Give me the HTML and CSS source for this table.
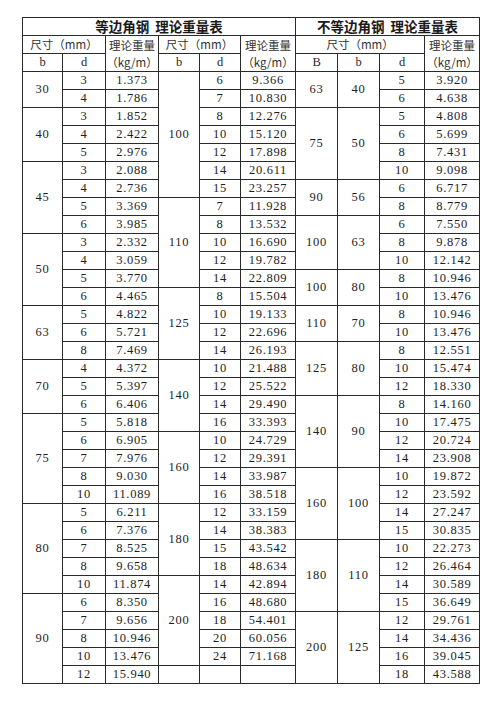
FILE: index.html
```html
<!DOCTYPE html>
<html lang="zh-CN">
<head>
<meta charset="utf-8">
<title>角钢理论重量表</title>
<link rel="stylesheet" href="styles.css">
</head>
<body>
<table class="sheet">
<colgroup>
<col class="c40"><col class="c43"><col class="c53"><col class="c41"><col class="c41"><col class="c55"><col class="c42"><col class="c42"><col class="c45"><col class="c55">
</colgroup>
<thead>
<tr><th colspan="6" class="title">等边角钢 理论重量表</th><th colspan="4" class="title">不等边角钢 理论重量表</th></tr>
<tr><th colspan="2" class="hd">尺寸（mm）</th><th rowspan="2" class="hd">理论重量<br>（kg/m）</th><th colspan="2" class="hd">尺寸（mm）</th><th rowspan="2" class="hd">理论重量<br>（kg/m）</th><th colspan="3" class="hd">尺寸（mm）</th><th rowspan="2" class="hd">理论重量<br>（kg/m）</th></tr>
<tr><th class="lt">b</th><th class="lt">d</th><th class="lt">b</th><th class="lt">d</th><th class="lt">B</th><th class="lt">b</th><th class="lt">d</th></tr>
</thead>
<tbody>
<tr><td rowspan="2">30</td><td>3</td><td>1.373</td><td rowspan="7">100</td><td>6</td><td>9.366</td><td rowspan="2">63</td><td rowspan="2">40</td><td>5</td><td>3.920</td></tr>
<tr><td>4</td><td>1.786</td><td>7</td><td>10.830</td><td>6</td><td>4.638</td></tr>
<tr><td rowspan="3">40</td><td>3</td><td>1.852</td><td>8</td><td>12.276</td><td rowspan="4">75</td><td rowspan="4">50</td><td>5</td><td>4.808</td></tr>
<tr><td>4</td><td>2.422</td><td>10</td><td>15.120</td><td>6</td><td>5.699</td></tr>
<tr><td>5</td><td>2.976</td><td>12</td><td>17.898</td><td>8</td><td>7.431</td></tr>
<tr><td rowspan="4">45</td><td>3</td><td>2.088</td><td>14</td><td>20.611</td><td>10</td><td>9.098</td></tr>
<tr><td>4</td><td>2.736</td><td>15</td><td>23.257</td><td rowspan="2">90</td><td rowspan="2">56</td><td>6</td><td>6.717</td></tr>
<tr><td>5</td><td>3.369</td><td rowspan="5">110</td><td>7</td><td>11.928</td><td>8</td><td>8.779</td></tr>
<tr><td>6</td><td>3.985</td><td>8</td><td>13.532</td><td rowspan="3">100</td><td rowspan="3">63</td><td>6</td><td>7.550</td></tr>
<tr><td rowspan="4">50</td><td>3</td><td>2.332</td><td>10</td><td>16.690</td><td>8</td><td>9.878</td></tr>
<tr><td>4</td><td>3.059</td><td>12</td><td>19.782</td><td>10</td><td>12.142</td></tr>
<tr><td>5</td><td>3.770</td><td>14</td><td>22.809</td><td rowspan="2">100</td><td rowspan="2">80</td><td>8</td><td>10.946</td></tr>
<tr><td>6</td><td>4.465</td><td rowspan="4">125</td><td>8</td><td>15.504</td><td>10</td><td>13.476</td></tr>
<tr><td rowspan="3">63</td><td>5</td><td>4.822</td><td>10</td><td>19.133</td><td rowspan="2">110</td><td rowspan="2">70</td><td>8</td><td>10.946</td></tr>
<tr><td>6</td><td>5.721</td><td>12</td><td>22.696</td><td>10</td><td>13.476</td></tr>
<tr><td>8</td><td>7.469</td><td>14</td><td>26.193</td><td rowspan="3">125</td><td rowspan="3">80</td><td>8</td><td>12.551</td></tr>
<tr><td rowspan="3">70</td><td>4</td><td>4.372</td><td rowspan="4">140</td><td>10</td><td>21.488</td><td>10</td><td>15.474</td></tr>
<tr><td>5</td><td>5.397</td><td>12</td><td>25.522</td><td>12</td><td>18.330</td></tr>
<tr><td>6</td><td>6.406</td><td>14</td><td>29.490</td><td rowspan="4">140</td><td rowspan="4">90</td><td>8</td><td>14.160</td></tr>
<tr><td rowspan="5">75</td><td>5</td><td>5.818</td><td>16</td><td>33.393</td><td>10</td><td>17.475</td></tr>
<tr><td>6</td><td>6.905</td><td rowspan="4">160</td><td>10</td><td>24.729</td><td>12</td><td>20.724</td></tr>
<tr><td>7</td><td>7.976</td><td>12</td><td>29.391</td><td>14</td><td>23.908</td></tr>
<tr><td>8</td><td>9.030</td><td>14</td><td>33.987</td><td rowspan="4">160</td><td rowspan="4">100</td><td>10</td><td>19.872</td></tr>
<tr><td>10</td><td>11.089</td><td>16</td><td>38.518</td><td>12</td><td>23.592</td></tr>
<tr><td rowspan="5">80</td><td>5</td><td>6.211</td><td rowspan="4">180</td><td>12</td><td>33.159</td><td>14</td><td>27.247</td></tr>
<tr><td>6</td><td>7.376</td><td>14</td><td>38.383</td><td>15</td><td>30.835</td></tr>
<tr><td>7</td><td>8.525</td><td>15</td><td>43.542</td><td rowspan="4">180</td><td rowspan="4">110</td><td>10</td><td>22.273</td></tr>
<tr><td>8</td><td>9.658</td><td>18</td><td>48.634</td><td>12</td><td>26.464</td></tr>
<tr><td>10</td><td>11.874</td><td rowspan="5">200</td><td>14</td><td>42.894</td><td>14</td><td>30.589</td></tr>
<tr><td rowspan="5">90</td><td>6</td><td>8.350</td><td>16</td><td>48.680</td><td>15</td><td>36.649</td></tr>
<tr><td>7</td><td>9.656</td><td>18</td><td>54.401</td><td rowspan="4">200</td><td rowspan="4">125</td><td>12</td><td>29.761</td></tr>
<tr><td>8</td><td>10.946</td><td>20</td><td>60.056</td><td>14</td><td>34.436</td></tr>
<tr><td>10</td><td>13.476</td><td>24</td><td>71.168</td><td>16</td><td>39.045</td></tr>
<tr><td>12</td><td>15.940</td><td></td><td></td><td></td><td>18</td><td>43.588</td></tr>
</tbody>
</table>
</body>
</html>
```
FILE: styles.css
```css
html, body {
  margin: 0;
  padding: 0;
  background: #fff;
}

body {
  padding: 17px 0 0 22px;
}

.sheet {
  border-collapse: collapse;
  table-layout: fixed;
  width: 457px;
  color: #1e1e1e;
  font-family: "Liberation Serif", "Noto Sans CJK SC", serif;
  font-size: 12.5px;
}

.c40 { width: 40px; }
.c41 { width: 41px; }
.c42 { width: 42px; }
.c43 { width: 43px; }
.c45 { width: 45px; }
.c53 { width: 53px; }
.c55 { width: 55px; }

.sheet tr {
  height: 18px;
}

.sheet th,
.sheet td {
  border: 1px solid #2a2a2a;
  padding: 0;
  text-align: center;
  vertical-align: middle;
  line-height: 17px;
  white-space: nowrap;
  overflow: hidden;
}

.sheet td {
  letter-spacing: 0.7px;
}

.title {
  font-family: "Noto Sans CJK SC", sans-serif;
  font-size: 13.5px;
  font-weight: bold;
  color: #1a1a1a;
  word-spacing: 3px;
}

.hd {
  font-family: "Noto Sans CJK SC", sans-serif;
  font-size: 11.5px;
  font-weight: normal;
  color: #333;
}

.lt {
  font-weight: normal;
  font-size: 12.5px;
  color: #2a2a2a;
}
```
